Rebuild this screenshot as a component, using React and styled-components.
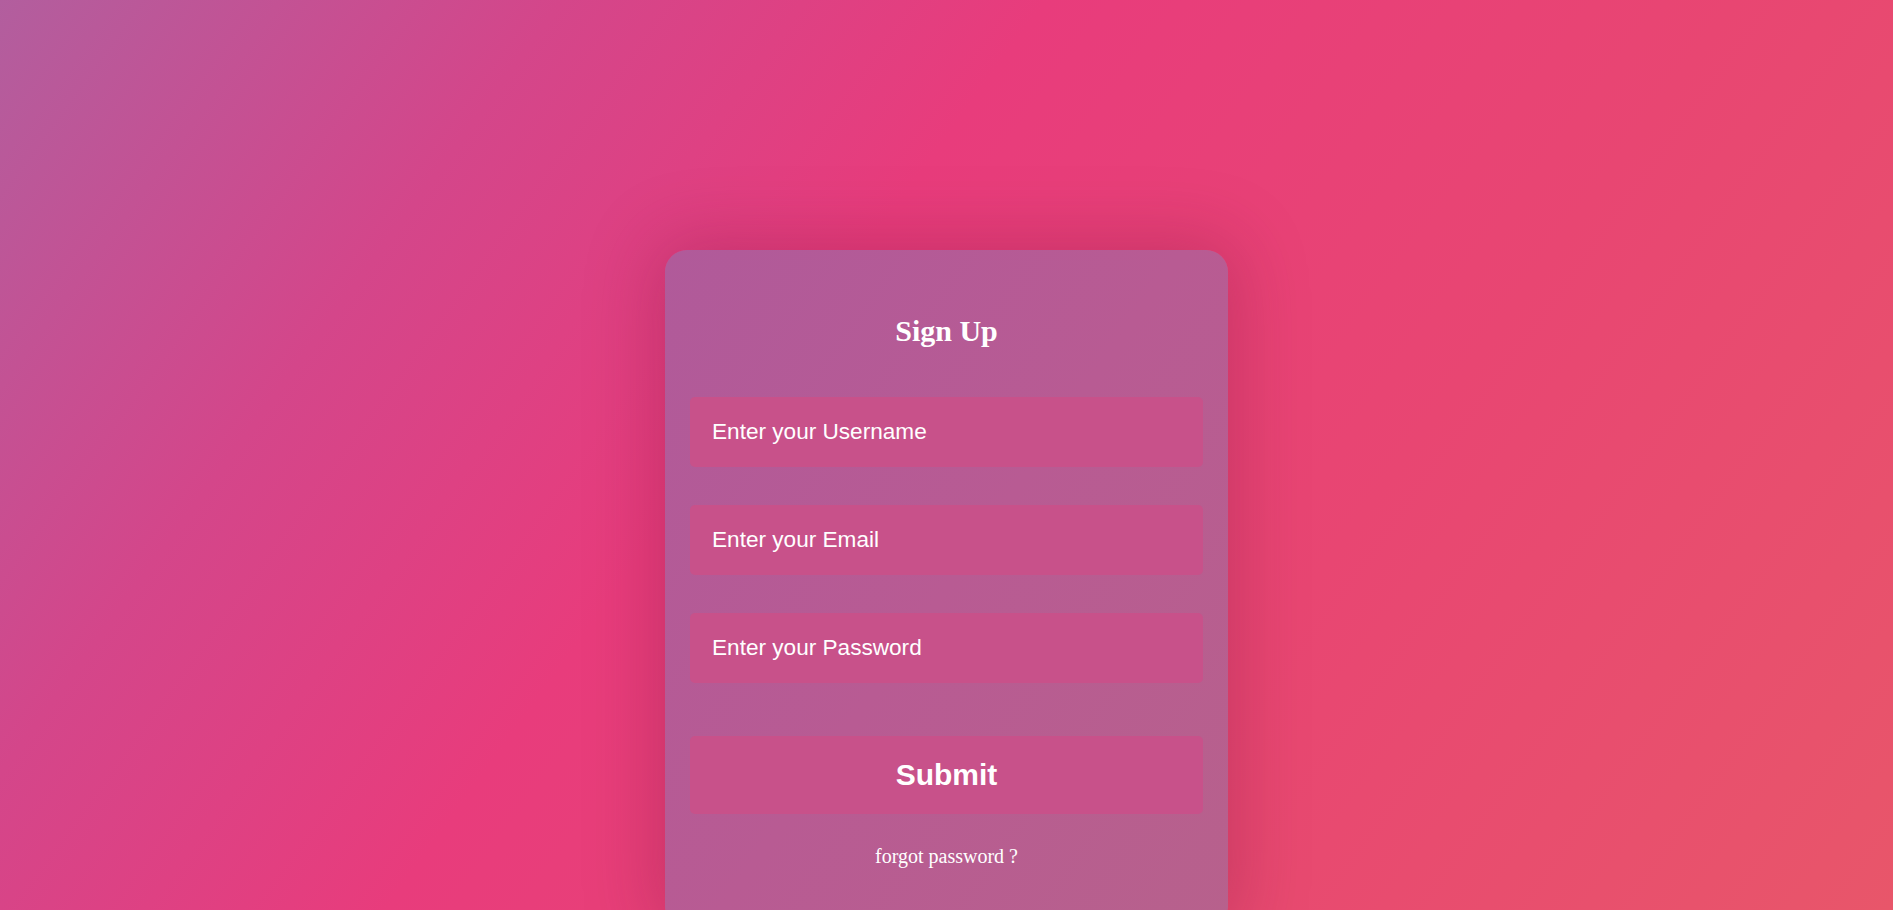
import styled, { createGlobalStyle } from "styled-components";

const GlobalStyle = createGlobalStyle`
  * {
    box-sizing: border-box;
  }
  html, body {
    margin: 0;
    padding: 0;
    overflow: hidden;
  }
  input::placeholder {
    color: #ffffff;
    opacity: 1;
  }
`;

const Page = styled.div`
  height: 100vh;
  overflow: hidden;
  display: flex;
  justify-content: center;
  align-items: flex-start;
  padding-top: 250px;
  background: linear-gradient(
    126deg,
    #b25e9e 0%,
    #d4468a 22%,
    #e83c7c 41%,
    #e84672 68%,
    #e8566a 100%
  );
`;

const Card = styled.div`
  width: 563px;
  flex-shrink: 0;
  padding: 25px 25px 60px;
  border-radius: 22px;
  background: linear-gradient(125deg, #b05a9a 0%, #b85b93 50%, #b7618c 100%);
  box-shadow: 0 0 70px 10px rgba(120, 20, 60, 0.28);
  display: flex;
  flex-direction: column;
`;

const Title = styled.h2`
  margin: 38px 0 49px;
  line-height: 35px;
  text-align: center;
  font-family: "Liberation Serif", "Times New Roman", serif;
  font-size: 30px;
  font-weight: 700;
  color: #ffffff;
`;

const Form = styled.form`
  display: flex;
  flex-direction: column;
`;

const Input = styled.input`
  height: 70px;
  width: 100%;
  margin-bottom: 38px;
  padding: 0 22px;
  border: none;
  border-radius: 5px;
  outline: none;
  background: #c8518a;
  color: #ffffff;
  font-family: "Liberation Sans", Arial, sans-serif;
  font-size: 22.6px;
`;

const Button = styled.button`
  height: 78px;
  width: 100%;
  margin-top: 15px;
  border: none;
  border-radius: 5px;
  background: #c8518a;
  color: #ffffff;
  font-family: "Liberation Sans", Arial, sans-serif;
  font-size: 30px;
  font-weight: 700;
  cursor: pointer;
`;

const Forgot = styled.a`
  margin-top: 31px;
  line-height: 23px;
  text-align: center;
  font-family: "Liberation Serif", "Times New Roman", serif;
  font-size: 20px;
  color: #ffffff;
  cursor: pointer;
`;

export default function App() {
  return (
    <>
      <GlobalStyle />
      <Page>
        <Card>
          <Title>Sign Up</Title>
          <Form onSubmit={(e) => e.preventDefault()}>
            <Input type="text" placeholder="Enter your Username" />
            <Input type="email" placeholder="Enter your Email" />
            <Input type="password" placeholder="Enter your Password" />
            <Button type="submit">Submit</Button>
          </Form>
          <Forgot>forgot password ?</Forgot>
        </Card>
      </Page>
    </>
  );
}
